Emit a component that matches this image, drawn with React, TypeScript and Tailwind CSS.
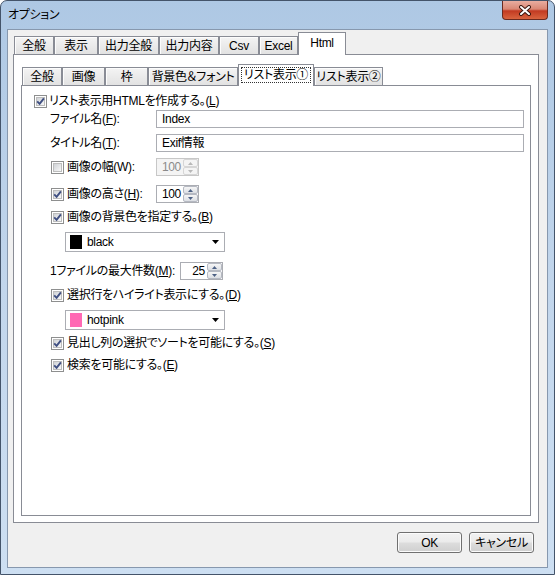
import React from 'react'

const OUTER_TABS = [
  { label: '全般', w: 'w-[40px]' },
  { label: '表示', w: 'w-[44px]' },
  { label: '出力全般', w: 'w-[61px]' },
  { label: '出力内容', w: 'w-[60px]' },
  { label: 'Csv', w: 'w-[40px]' },
  { label: 'Excel', w: 'w-[39px]' },
  { label: 'Html', w: 'w-[48px]', active: true },
]

const INNER_TABS = [
  { label: '全般', w: 'w-[40px]' },
  { label: '画像', w: 'w-[43px]' },
  { label: '枠', w: 'w-[43px]' },
  { label: '背景色＆フォント', w: 'w-[90px]' },
  { label: 'リスト表示①', w: 'w-[76px]', active: true },
  { label: 'リスト表示②', w: 'w-[69px]' },
]

type TabProps = { label: string; w: string; active?: boolean; inner?: boolean }

function Tab({ label, w, active, inner }: TabProps) {
  if (active) {
    return (
      <div
        className={`${w} relative z-10 -mb-px flex ${inner ? 'h-[22px]' : 'h-[23px]'} items-center justify-center border border-b-0 border-[#898c95] bg-white pb-[2px] whitespace-nowrap`}
      >
        {inner ? (
          <span className="border border-dotted border-[#333] px-[2px] leading-[14px]">{label}</span>
        ) : (
          label
        )}
      </div>
    )
  }
  return (
    <div
      className={`${w} flex h-[18px] items-center justify-center border border-b-0 border-[#898c95] bg-gradient-to-b from-[#f4f4f4] to-[#e2e2e2] shadow-[inset_1px_1px_0_#fcfcfc] whitespace-nowrap`}
    >
      {label}
    </div>
  )
}

function Check({ on }: { on?: boolean }) {
  return (
    <span className="relative flex h-[13px] w-[13px] shrink-0 items-center justify-center border border-[#8e8f8f] bg-white">
      <span className="h-[9px] w-[9px] border border-[#bdbdbd] bg-gradient-to-br from-[#cfd2d6] to-[#f8f8f8]" />
      {on && (
        <svg className="absolute left-0 top-0" width="11" height="11" viewBox="0 0 11 11">
          <path d="M2.2 5.4 L4.6 7.9 L8.9 2.4" stroke="#3f4f82" strokeWidth="1.9" fill="none" />
        </svg>
      )}
    </span>
  )
}

function SpinBtn({ up, disabled }: { up?: boolean; disabled?: boolean }) {
  return (
    <span
      className={`flex flex-1 items-center justify-center rounded-[2px] border ${disabled ? 'border-[#d6d6d6] bg-[#f4f4f4]' : 'border-[#b5b9c2] bg-gradient-to-b from-[#f6f6f6] to-[#dcdfe4]'}`}
    >
      <svg width="5" height="3" viewBox="0 0 5 3">
        <path d={up ? 'M0 3 L2.5 0 L5 3 Z' : 'M0 0 L2.5 3 L5 0 Z'} fill={disabled ? '#b8b8b8' : '#4d6185'} />
      </svg>
    </span>
  )
}

function Spin({ value, disabled }: { value: string; disabled?: boolean }) {
  return (
    <div
      className={`flex h-[18px] w-[43px] shrink-0 border ${disabled ? 'border-[#c7c7c7] bg-[#f4f4f4] text-[#8a8a8a]' : 'border-[#abadb3] bg-white'}`}
    >
      <span className="flex-1 pr-[2px] text-right leading-[16px]">{value}</span>
      <div className="flex w-[15px] flex-col">
        <SpinBtn up disabled={disabled} />
        <SpinBtn disabled={disabled} />
      </div>
    </div>
  )
}

function Combo({ swatch, label }: { swatch: string; label: string }) {
  return (
    <div className="ml-[43px] flex h-[20px] w-[160px] items-center border border-[#abadb3] bg-white pl-[4px] pr-[5px]">
      <span className={`h-[14px] w-[12px] ${swatch}`} />
      <span className="ml-[5px] flex-1">{label}</span>
      <svg width="7" height="4" viewBox="0 0 7 4">
        <path d="M0 0 L7 0 L3.5 4 Z" fill="#000" />
      </svg>
    </div>
  )
}

function CheckRow({ on, children, className = '' }: { on?: boolean; children: React.ReactNode; className?: string }) {
  return (
    <div className={`ml-[29px] flex h-[18px] items-center gap-[3px] ${className}`}>
      <Check on={on} />
      <span>{children}</span>
    </div>
  )
}

function Btn({ children }: { children: React.ReactNode }) {
  return (
    <div className="flex h-[21px] w-[65px] items-center justify-center rounded-[3px] border border-[#707070] bg-[linear-gradient(#f2f2f2,#ebebeb_48%,#dddddd_52%,#cfcfcf)] shadow-[inset_0_0_0_1px_#fbfbfb]">
      {children}
    </div>
  )
}

export default function App() {
  return (
    <div className="flex h-[575px] w-[555px] flex-col overflow-hidden whitespace-nowrap rounded-t-[7px] border border-[#44546a] bg-gradient-to-b from-[#aec8e4] via-[#c2d6ec] to-[#cddff2] font-['Liberation_Sans','Noto_Sans_CJK_JP',sans-serif] text-[12px] tracking-[-0.3px] text-black [font-feature-settings:'palt']">
      <div className="relative flex h-[28px] items-center pb-[1px] pl-[7px]">
        <span>オプション</span>
        <div className="absolute right-[6px] top-0 flex h-[19px] w-[46px] items-center justify-center rounded-b-[4px] border border-t-0 border-[#6a2a20] bg-[linear-gradient(#e9ada0,#da8774_45%,#c23a22_55%,#d9643f)]">
          <svg width="14" height="11" viewBox="0 0 14 11">
            <path d="M3 2 L11 9 M11 2 L3 9" stroke="#3d1810" strokeWidth="4" strokeLinecap="round" />
            <path d="M3 2 L11 9 M11 2 L3 9" stroke="#fff" strokeWidth="2" strokeLinecap="round" />
          </svg>
        </div>
      </div>

      <div className="ml-[6px] flex h-[539px] w-[541px] flex-col border border-[#8798ae] bg-[#f0f0f0]">
        <div className="ml-[5px] mt-[2px] w-[526px]">
          <div className="ml-px flex h-[22px] items-end">
            {OUTER_TABS.map((t) => (
              <Tab key={t.label} {...t} />
            ))}
          </div>
          <div className="flex h-[469px] flex-col border border-[#898c95] bg-white">
            <div className="ml-[7px] mt-[9px] w-[510px]">
              <div className="ml-px flex h-[21px] items-end">
                {INNER_TABS.map((t) => (
                  <Tab key={t.label} {...t} inner />
                ))}
              </div>
              <div className="flex h-[431px] flex-col border border-[#898c95] bg-white pt-[6px]">
                <div className="ml-[12px] flex h-[18px] items-center gap-[2px]">
                  <Check on />
                  <span>
                    リスト表示用HTMLを作成する。(<u>L</u>)
                  </span>
                </div>

                <div className="ml-[28px] flex h-[18px] items-center">
                  <span className="w-[106px]">
                    ファイル名(<u>F</u>):
                  </span>
                  <div className="flex h-[18px] w-[368px] items-center border border-[#abadb3] px-[5px]">Index</div>
                </div>

                <div className="ml-[28px] mt-[6px] flex h-[18px] items-center">
                  <span className="w-[106px]">
                    タイトル名(<u>T</u>):
                  </span>
                  <div className="flex h-[18px] w-[368px] items-center border border-[#abadb3] px-[5px]">Exif情報</div>
                </div>

                <div className="ml-[29px] mt-[6px] flex h-[18px] items-center">
                  <div className="flex w-[105px] items-center gap-[3px]">
                    <Check />
                    <span>画像の幅(W):</span>
                  </div>
                  <Spin value="100" disabled />
                </div>

                <div className="ml-[29px] mt-[9px] flex h-[18px] items-center">
                  <div className="flex w-[105px] items-center gap-[3px]">
                    <Check on />
                    <span>
                      画像の高さ(<u>H</u>):
                    </span>
                  </div>
                  <Spin value="100" />
                </div>

                <CheckRow on className="mt-[5px]">
                  画像の背景色を指定する。(<u>B</u>)
                </CheckRow>

                <div className="mt-[6px]">
                  <Combo swatch="bg-black" label="black" />
                </div>

                <div className="ml-[28px] mt-[10px] flex h-[18px] items-center">
                  <span className="w-[130px]">
                    1ファイルの最大件数(<u>M</u>):
                  </span>
                  <Spin value="25" />
                </div>

                <CheckRow on className="mt-[6px]">
                  選択行をハイライト表示にする。(<u>D</u>)
                </CheckRow>

                <div className="mt-[6px]">
                  <Combo swatch="bg-[#ff69b4]" label="hotpink" />
                </div>

                <CheckRow on className="mt-[4px]">
                  見出し列の選択でソートを可能にする。(<u>S</u>)
                </CheckRow>

                <CheckRow on className="mt-[4px]">
                  検索を可能にする。(<u>E</u>)
                </CheckRow>
              </div>
            </div>
          </div>
        </div>

        <div className="mt-[9px] flex justify-end gap-[7px] pr-[13px]">
          <Btn>OK</Btn>
          <Btn>キャンセル</Btn>
        </div>
      </div>
    </div>
  )
}
